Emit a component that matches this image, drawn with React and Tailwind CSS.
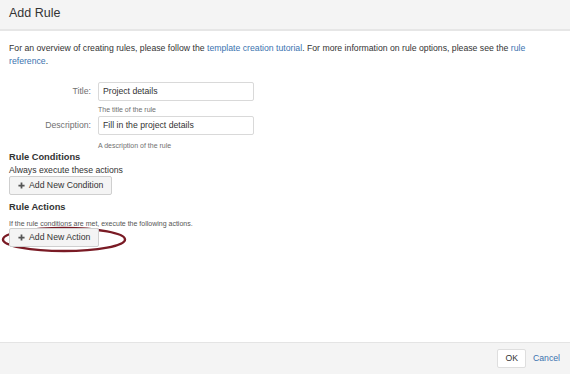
import React from 'react';

const PlusIcon = () => (
  <svg width="7" height="7" viewBox="0 0 8 8" className="shrink-0">
    <path d="M4 0.5v7M0.5 4h7" stroke="#555" strokeWidth="2" />
  </svg>
);

const ToolButton = ({ children }) => (
  <button className="relative z-10 flex items-center gap-[4px] h-[19px] px-[8px] bg-[#f4f4f4] border border-[#cfcfcf] rounded-[2px] text-[8.7px] text-[#333] leading-none">
    <PlusIcon />
    {children}
  </button>
);

const App = () => {
  return (
    <div className="flex flex-col w-[570px] h-[374px] bg-white text-[#333] overflow-hidden" style={{ fontFamily: '"Liberation Sans", Arial, sans-serif' }}>
      <div className="h-[31px] shrink-0 flex items-center px-[9px] bg-[#f4f4f4] border-b-2 border-[#e6e6e6]">
        <h1 className="text-[12.5px] text-[#333] pb-[2px]">Add Rule</h1>
      </div>

      <div className="flex-1 px-[9px] pt-[11px]">
        <p className="text-[8.7px] leading-[13px]">
          For an overview of creating rules, please follow the{' '}
          <a className="text-[#3b73af]">template creation tutorial</a>. For more information on rule options, please see the{' '}
          <a className="text-[#3b73af]">rule reference</a>.
        </p>

        <div className="grid grid-cols-[82px_156px] gap-x-[7px] mt-[14px] items-start">
          <label className="h-[19px] flex items-center justify-end text-[8.7px] text-[#707070]">Title:</label>
          <div>
            <div className="h-[19px] flex items-center px-[4px] border border-[#d9d9d9] rounded-[2px] text-[8.7px] text-[#333]">Project details</div>
            <div className="mt-[4px] h-[9px] text-[7px] leading-[9px] text-[#707070]">The title of the rule</div>
          </div>

          <label className="mt-[2px] h-[19px] flex items-center justify-end text-[8.7px] text-[#707070]">Description:</label>
          <div className="mt-[2px]">
            <div className="h-[19px] flex items-center px-[4px] border border-[#d9d9d9] rounded-[2px] text-[8.7px] text-[#333]">Fill in the project details</div>
            <div className="mt-[6px] h-[9px] text-[7px] leading-[9px] text-[#707070]">A description of the rule</div>
          </div>
        </div>

        <h2 className="mt-[1px] text-[9.3px] leading-[13px] font-bold text-[#333]">Rule Conditions</h2>
        <p className="text-[8.7px] leading-[12px]">Always execute these actions</p>
        <div className="flex">
          <ToolButton>Add New Condition</ToolButton>
        </div>

        <h2 className="mt-[6px] text-[9.3px] leading-[13px] font-bold text-[#333]">Rule Actions</h2>
        <p className="mt-[5px] text-[7px] leading-[9px] text-[#555]">If the rule conditions are met, execute the following actions.</p>
        <div className="flex">
          <div className="relative">
            <svg width="130" height="30" viewBox="0 0 130 30" className="absolute left-[-9px] top-[-3px] z-0 overflow-visible">
              <ellipse cx="64" cy="14.5" rx="61" ry="11.5" fill="none" stroke="#7a1b25" strokeWidth="2.4" />
            </svg>
            <ToolButton>Add New Action</ToolButton>
          </div>
        </div>
      </div>

      <div className="h-[32px] shrink-0 flex items-center justify-end gap-[7px] pr-[10px] bg-[#f4f4f4] border-t border-[#e4e4e4]">
        <button className="h-[19px] px-[7px] bg-white border border-[#dedede] rounded-[2px] text-[8.7px] text-[#333]">OK</button>
        <a className="text-[8.7px] text-[#3b73af]">Cancel</a>
      </div>
    </div>
  );
};

export default App;
